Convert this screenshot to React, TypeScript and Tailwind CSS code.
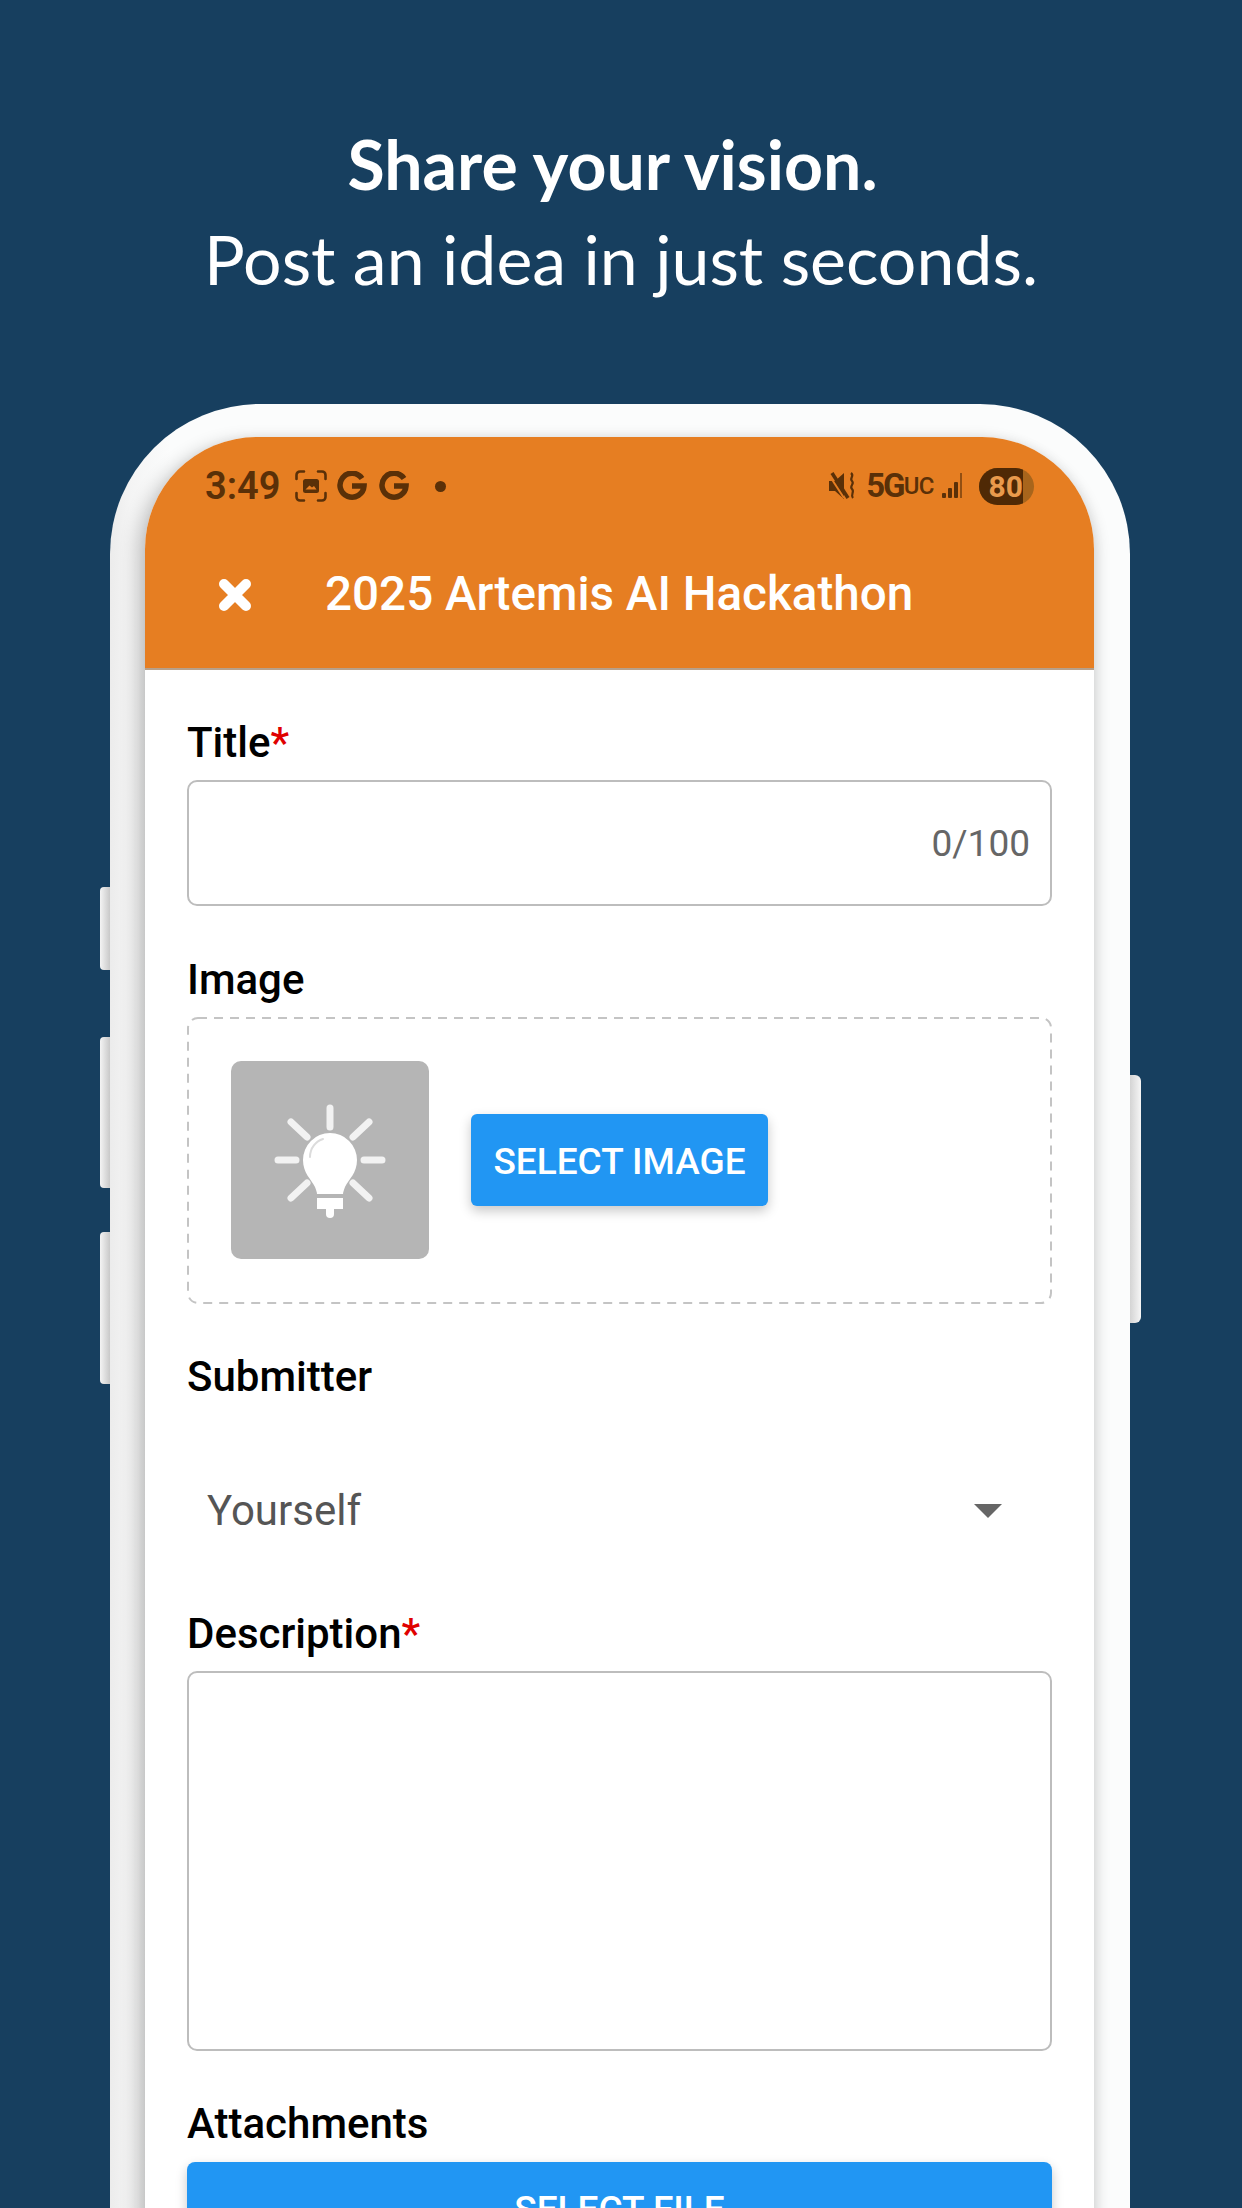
const Label = ({ text, required }: { text: string; required?: boolean }) => (
  <div className="h-[50px] pt-[1px] text-[42px] leading-[50px] font-medium text-black">
    {text}
    {required && <span className="text-[#e00000]">*</span>}
  </div>
);

const BigG = () => (
  <svg width="30" height="30" viewBox="0 0 30 30" fill="none" stroke="#5a3008" strokeWidth="5.5">
    <path d="M25 7.5A12 12 0 1 0 27 15H15" />
  </svg>
);

const ScreenshotIcon = () => (
  <svg width="32" height="32" viewBox="0 0 32 32" fill="none" stroke="#5a3008" strokeWidth="2.6" strokeLinecap="round">
    <path d="M1.500 9V5a3.500 3.500 0 0 1 3.500-3.500h4M23 1.500h4A3.500 3.500 0 0 1 30.500 5v4M1.500 23v4A3.500 3.500 0 0 0 5 30.500h4M30.500 23v4a3.500 3.500 0 0 1-3.500 3.500h-4" />
    <rect x="8" y="9" width="16" height="14" rx="2.500" fill="#5a3008" stroke="none" />
    <path d="M10.500 19.500l4-4 2.500 2 2-1.500 2.500 3.500z" fill="#e67e22" stroke="none" />
  </svg>
);

const MuteIcon = () => (
  <svg width="26" height="28" viewBox="0 0 26 28" fill="#5a3008">
    <path d="M0 9h6l9-8v26l-9-8H0z" />
    <path d="M0 3l15 23" stroke="#e67e22" strokeWidth="2" />
    <path d="M3 1l16 25" stroke="#5a3008" strokeWidth="3.500" />
    <path d="M22 1c4 3-2 5 1 8s-3 5 0 8-2 5 1 9" fill="none" stroke="#5a3008" strokeWidth="2.200" />
  </svg>
);

const SignalIcon = () => (
  <svg width="24" height="26" viewBox="0 0 24 26" fill="#5a3008">
    <rect x="0" y="20" width="4" height="5" rx="1" />
    <rect x="6" y="15" width="4" height="10" rx="1" />
    <rect x="12" y="9" width="4" height="16" rx="1" />
    <rect x="18" y="0" width="2" height="25" opacity="0.6" />
  </svg>
);

const CloseIcon = () => (
  <svg width="34" height="34" viewBox="0 0 34 34" fill="none" stroke="#fff" strokeWidth="10" strokeLinecap="round">
    <path d="M6 6l22 22M28 6L6 28" />
  </svg>
);

const BulbIcon = () => (
  <svg width="198" height="198" viewBox="0 0 198 198" fill="none">
    <g stroke="#f2f2f2" strokeWidth="7" strokeLinecap="round">
      <path d="M99 47v19M47 99h18M133 99h18" />
      <path d="M60 61l16 15M138 61l-16 15M60 137l16-15M138 137l-16-15" />
    </g>
    <path d="M72 99a27 27 0 0 1 54 0c0 13-8 19-12 27-1 3-2 5-2 7H86c0-2-1-4-2-7-4-8-12-14-12-27z" fill="#fff" />
    <rect x="86" y="137" width="26" height="11" fill="#fff" />
    <path d="M95 148h8v5a4 4 0 0 1-8 0z" fill="#fff" />
    <path d="M79 96c0-9 6-16 13-18" stroke="#dcdcdc" strokeWidth="2" strokeLinecap="round" />
  </svg>
);

export default function App() {
  return (
    <div className="h-[2208px] overflow-hidden bg-[#173f5f] font-['Roboto',sans-serif]">
      {/* Headline */}
      <div className="pt-[116px] pb-[98px] text-center font-['Lato',sans-serif] text-[68px] leading-[95px] text-white">
        <div className="pr-[17px] font-bold">Share your vision.</div>
        <div>Post an idea in just seconds.</div>
      </div>

      {/* Phone */}
      <div className="relative ml-[110px] w-[1020px]">
        <div className="absolute top-[483px] left-[-10px] h-[83px] w-[10px] rounded-l-[4px] bg-gradient-to-r from-[#f4f4f4] to-[#c9c9c9]" />
        <div className="absolute top-[633px] left-[-10px] h-[151px] w-[10px] rounded-l-[4px] bg-gradient-to-r from-[#f4f4f4] to-[#c9c9c9]" />
        <div className="absolute top-[828px] left-[-10px] h-[152px] w-[10px] rounded-l-[4px] bg-gradient-to-r from-[#f4f4f4] to-[#c9c9c9]" />
        <div className="absolute top-[671px] right-[-11px] h-[248px] w-[11px] rounded-r-[6px] bg-gradient-to-r from-[#d4d4d4] to-[#f6f6f6]" />

        <div className="relative rounded-t-[150px] bg-[linear-gradient(90deg,#ececec_0,#f4f4f4_20px,#fbfcfc_60px)] pt-[33px] pr-[36px] pb-[200px] pl-[35px]">
          <div className="overflow-hidden rounded-t-[112px] bg-white shadow-[-8px_5px_18px_rgba(0,0,0,0.2),4px_5px_14px_rgba(0,0,0,0.12)]">
            {/* Status and app bar */}
            <div className="border-b-2 border-[#b7a08a] bg-[#e67e22]">
              <div className="flex h-[98px] items-center justify-between pr-[60px] pl-[60px] text-[#5a3008]">
                <div className="flex items-center">
                  <span className="w-[90px] text-[38px] font-semibold">3:49</span>
                  <ScreenshotIcon />
                  <span className="ml-[10px] flex gap-[12px]">
                    <BigG />
                    <BigG />
                  </span>
                  <span className="ml-[26px] h-[11px] w-[11px] rounded-full bg-[#5a3008]" />
                </div>
                <div className="flex items-center">
                  <MuteIcon />
                  <span className="ml-[11px] text-[33px] font-bold tracking-[-2px]">5G</span>
                  <span className="text-[24px] font-medium tracking-[-0.5px]">UC</span>
                  <span className="ml-[8px] flex">
                    <SignalIcon />
                  </span>
                  <span className="ml-[13px] flex h-[37px] w-[55px] overflow-hidden rounded-full bg-[#a8651c]">
                    <span className="flex w-[44px] items-center justify-end bg-[#4f2905] text-[30px] font-bold text-[#e89a4c]">
                      80
                    </span>
                  </span>
                </div>
              </div>
              <div className="flex h-[133px] items-center pb-[13px] pl-[73px]">
                <CloseIcon />
                <span className="ml-[73px] text-[47.600px] font-medium text-white">2025 Artemis AI Hackathon</span>
              </div>
            </div>

            {/* Form */}
            <div className="flex flex-col px-[42px] pt-[47px]">
              <Label text="Title" required />
              <div className="mt-[13px] flex h-[126px] items-center justify-end rounded-[10px] border-2 border-[#bdbdbd] pt-[2px] pr-[20px] text-[37px] text-[#666]">
                0/100
              </div>

              <div className="mt-[48px]">
                <Label text="Image" />
              </div>
              <div className="relative mt-[13px] flex h-[287px] items-center gap-[42px] pb-[1px] pl-[44px]">
                <svg className="absolute inset-0 h-full w-full">
                  <rect x="1" y="1" width="863" height="285" rx="10" fill="none" stroke="#c4c4c4" strokeWidth="2" strokeDasharray="9 7" />
                </svg>
                <div className="relative h-[198px] w-[198px] rounded-[10px] bg-[#b5b5b5]">
                  <BulbIcon />
                </div>
                <div className="relative flex h-[92px] w-[297px] items-center justify-center rounded-[6px] bg-[#2196f3] pt-[3px] text-[37px] font-medium text-white shadow-[0_5px_12px_rgba(0,0,0,0.22)]">
                  SELECT IMAGE
                </div>
              </div>

              <div className="mt-[47px]">
                <Label text="Submitter" />
              </div>
              <div className="mt-[47px] flex h-[125px] items-center justify-between pr-[50px] pl-[20px] text-[42px] text-[#555]">
                <span>Yourself</span>
                <span className="h-0 w-0 border-x-[14px] border-t-[14px] border-x-transparent border-t-[#666]" />
              </div>

              <div className="mt-[35px]">
                <Label text="Description" required />
              </div>
              <div className="mt-[13px] h-[380px] rounded-[10px] border-2 border-[#bdbdbd]" />

              <div className="mt-[47px]">
                <Label text="Attachments" />
              </div>
              <div className="mt-[14px] flex h-[92px] items-center justify-center rounded-[8px] bg-[#2196f3] pt-[3px] text-[37px] font-medium text-white shadow-[0_5px_12px_rgba(0,0,0,0.22)]">
                SELECT FILE
              </div>
            </div>
          </div>
        </div>
      </div>
    </div>
  );
}
